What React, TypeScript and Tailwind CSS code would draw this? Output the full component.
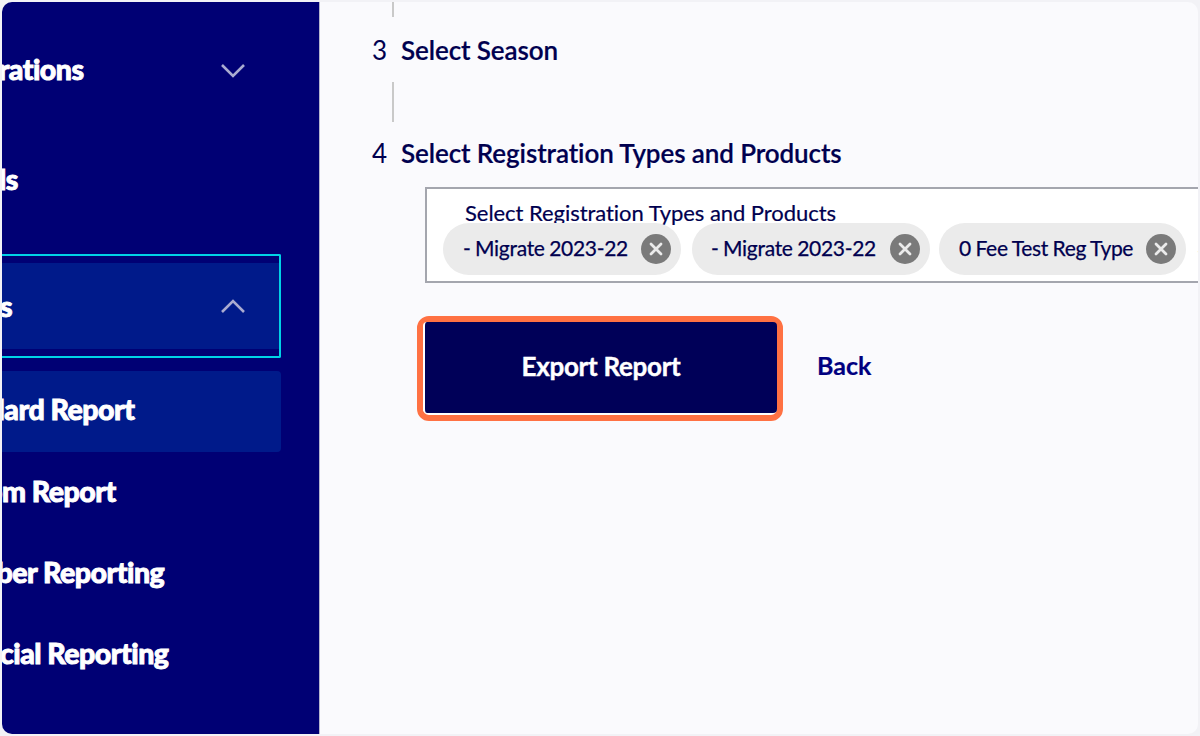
import React from "react";

const Chevron = ({ up }: { up?: boolean }) => (
  <svg width="26" height="16" viewBox="0 0 26 16" fill="none" stroke="#a9abd0" strokeWidth="2.6" className="shrink-0">
    <path d={up ? "M2 14 L13 3 L24 14" : "M2 2 L13 13 L24 2"} />
  </svg>
);

const Chip = ({ label, width, left }: { label: string; width: string; left: string }) => (
  <div className={`flex h-[52px] shrink-0 items-center justify-between rounded-full bg-[#ebebeb] pr-[10px] ${width} ${left}`}>
    <span className="mt-[-3px] text-[21px] tracking-[-0.3px] [word-spacing:-0.5px] whitespace-nowrap text-[#00004f] [-webkit-text-stroke:0.25px_#00004f]">{label}</span>
    <span className="flex h-[30px] w-[30px] items-center justify-center rounded-full bg-[#7a7a7a]">
      <svg width="16" height="16" viewBox="0 0 16 16" stroke="#ebebeb" strokeWidth="2.8" strokeLinecap="round">
        <path d="M3 3 L13 13 M13 3 L3 13" />
      </svg>
    </span>
  </div>
);

const SideText = ({ text, shift }: { text: string; shift: string }) => (
  <span className={`whitespace-nowrap text-[28.5px] font-black tracking-[-0.5px] text-white [-webkit-text-stroke:0.9px_white] ${shift}`}>{text}</span>
);

export default function App() {
  return (
    <div className="h-[736px] w-[1200px] overflow-hidden bg-[#f2f2f6] p-[2px] font-['Lato',sans-serif]">
      <div className="flex h-[732px] w-[1196px] overflow-hidden rounded-[10px] bg-[#fafafd]">
        <aside className="flex h-full w-[318px] shrink-0 flex-col overflow-hidden border-r border-[#b5b5cc] bg-[#000074]">
          <div className="flex h-[68px] shrink-0 items-end justify-between pr-[73px]">
            <SideText text="Registrations" shift="ml-[-79px] leading-[30px] mb-[-14px]" />
            <div className="mb-[-9px]"><Chevron /></div>
          </div>
          <div className="flex h-[110px] shrink-0 items-end">
            <SideText text="Fields" shift="ml-[-56px] leading-[30px] mb-[-14px]" />
          </div>
          <div className="mt-[74px] flex h-[104px] w-[279px] shrink-0 flex-col justify-center rounded-r-[2px] border-2 border-l-0 border-[#00d2e6] py-[7px]">
            <div className="flex flex-1 items-center justify-between bg-[#001a8a] pr-[33px]">
              <SideText text="Reports" shift="ml-[-86px]" />
              <Chevron up />
            </div>
          </div>
          <div className="mt-[13px] flex h-[81px] w-[279px] shrink-0 items-center rounded-r-[4px] bg-[#001a8a]">
            <SideText text="Standard Report" shift="ml-[-68px] mt-[-5px]" />
          </div>
          <div className="flex h-[81px] shrink-0 items-center"><SideText text="Custom Report" shift="ml-[-72px] mt-[-2px]" /></div>
          <div className="flex h-[81px] shrink-0 items-center"><SideText text="Member Reporting" shift="ml-[-70px] mt-[-2px]" /></div>
          <div className="flex h-[81px] shrink-0 items-center"><SideText text="Financial Reporting" shift="ml-[-70px] mt-[-2px]" /></div>
        </aside>

        <main className="min-w-0 flex-1 overflow-hidden text-[#00004f]">
          <div className="ml-[72px] h-[15px] w-[2px] bg-[#c9c9c9]" />
          <div className="mt-[19px] ml-[52px] flex h-[28px] items-center">
            <span className="w-[29px] text-[26px] font-normal">3</span>
            <span className="text-[26px] font-semibold tracking-[-0.1px] whitespace-nowrap [-webkit-text-stroke:0.2px_#00004f]">Select Season</span>
          </div>
          <div className="mt-[18px] ml-[72px] h-[40px] w-[2px] bg-[#c9c9c9]" />
          <div className="mt-[17px] ml-[52px] flex h-[28px] items-center">
            <span className="w-[29px] text-[26px] font-normal">4</span>
            <span className="text-[26px] font-semibold tracking-[-0.1px] whitespace-nowrap [-webkit-text-stroke:0.2px_#00004f]">Select Registration Types and Products</span>
          </div>
          <div className="mt-[20px] ml-[105px] h-[96px] w-[800px] border-2 border-[#a4a6ae] bg-white pt-[13px]">
            <div className="ml-[38px] h-[21px] text-[22px] leading-[21px] tracking-[-0.05px] whitespace-nowrap [-webkit-text-stroke:0.2px_#00004f]">Select Registration Types and Products</div>
            <div className="ml-[16px] flex">
              <Chip label="- Migrate 2023-22" width="w-[238px] pl-[20px]" left="" />
              <Chip label="- Migrate 2023-22" width="w-[238px] pl-[19px]" left="ml-[11px]" />
              <Chip label="0 Fee Test Reg Type" width="w-[247px] pl-[20px]" left="ml-[9px]" />
              <span className="ml-[11px] self-center text-[20px] text-[#d87a50]">-</span>
            </div>
          </div>
          <div className="mt-[33px] ml-[97px] flex items-center">
            <button className="h-[105px] w-[366px] rounded-[12px] border-[6px] border-[#ff7143] bg-white pb-[2px]">
              <span className="flex h-full w-full items-center justify-center rounded-[4px] border-l-2 border-white bg-[#000058] pb-[2px] text-[26px] font-bold tracking-[-0.3px] text-white [-webkit-text-stroke:0.4px_white]">Export Report</span>
            </button>
            <span className="mt-[-5px] ml-[34px] text-[25px] font-bold text-[#000080] [-webkit-text-stroke:0.2px_#000080]">Back</span>
          </div>
        </main>
      </div>
    </div>
  );
}
